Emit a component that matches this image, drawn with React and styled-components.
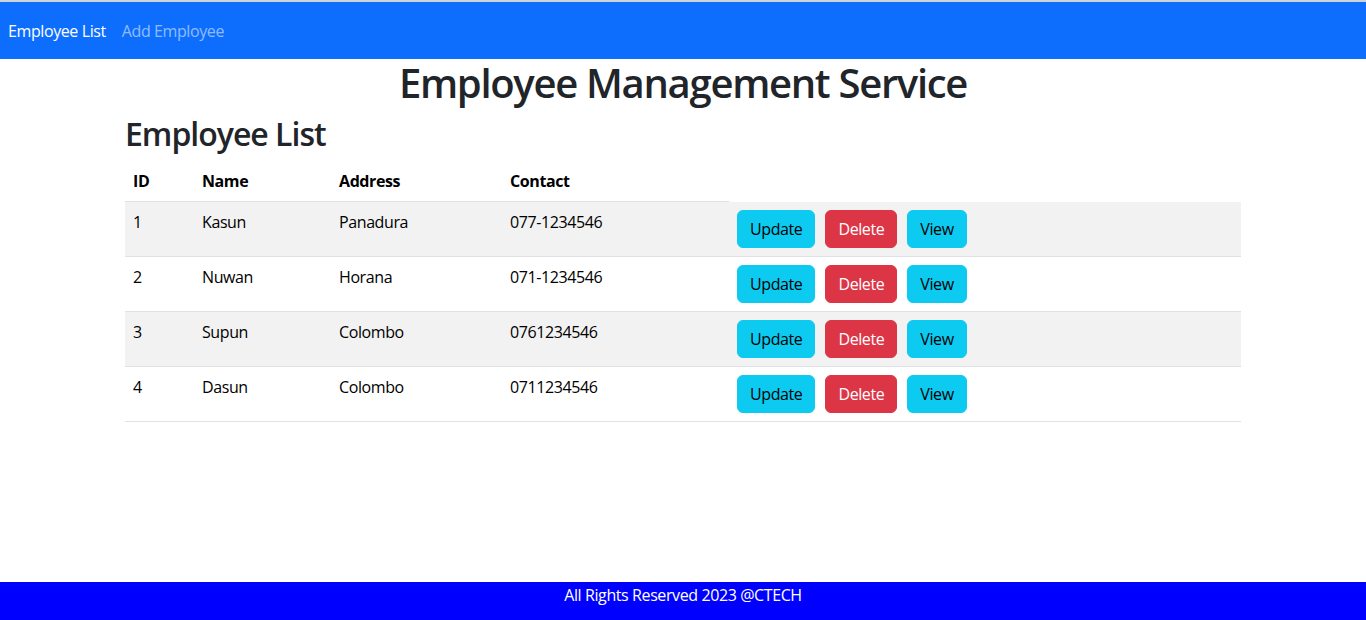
import React from 'react';
import styled, {createGlobalStyle} from 'styled-components';

const GlobalStyle = createGlobalStyle`
    html, body {
        margin: 0;
        padding: 0;
    }
    body {
        font-family: "Open Sans", "Noto Sans", sans-serif;
        font-size: 16px;
        line-height: 1.5;
        letter-spacing: -0.4px;
        color: #212529;
        background: #fff;
    }
    * {
        box-sizing: border-box;
    }
`

const Page = styled.div`
    display: flex;
    flex-direction: column;
    min-height: 100vh;
`

// 상단 네비게이션
const NavBar = styled.nav`
    display: flex;
    align-items: center;
    height: 59px;
    border-top: 2px solid #cfd2d6;
    background-color: #0d6efd;
    padding: 1px 0 0 8px;
`

const NavLink = styled.a`
    padding: 8px 16px 8px 0;
    color: ${props => props.active ? '#fff' : 'rgba(255, 255, 255, 0.55)'};
    text-decoration: none;
    font-size: 16px;
    cursor: pointer;
`

const Main = styled.main`
    flex: 1;
`

const Title = styled.h1`
    margin: 0 0 8px;
    text-align: center;
    font-size: 40px;
    font-weight: 600;
    letter-spacing: -1.3px;
    line-height: 1.2;
`

const Container = styled.div`
    width: 1140px;
    margin: 0 auto;
    padding: 0 12px;
`

const SubTitle = styled.h2`
    margin: 0 0 8px;
    font-size: 32px;
    font-weight: 600;
    letter-spacing: -1px;
    line-height: 1.2;
`

const Table = styled.table`
    width: 100%;
    border-collapse: collapse;
    color: #000;
`

const Th = styled.th`
    width: ${props => props.w}px;
    padding: 8px;
    text-align: left;
    font-weight: 700;
    border-bottom: 1px solid #dee2e6;
`

const Row = styled.tr`
    background-color: ${props => props.striped ? '#f2f2f2' : '#fff'};
`

const Td = styled.td`
    padding: 8px;
    vertical-align: top;
    border-bottom: 1px solid #dee2e6;
`

const ActionCell = styled(Td)`
    display: flex;
    gap: 10px;
`

const Btn = styled.button`
    font-family: inherit;
    font-size: 16px;
    line-height: 1.5;
    letter-spacing: -0.4px;
    padding: 6px 12px;
    border: 1px solid ${props => props.danger ? '#dc3545' : '#0dcaf0'};
    border-radius: 6px;
    background-color: ${props => props.danger ? '#dc3545' : '#0dcaf0'};
    color: ${props => props.danger ? '#fff' : '#000'};
    cursor: pointer;
`

const Footer = styled.footer`
    height: 38px;
    padding-top: 1px;
    background-color: #0000ff;
    color: #fff;
    text-align: center;
`

const employees = [
    {id: 1, name: 'Kasun', address: 'Panadura', contact: '077-1234546'},
    {id: 2, name: 'Nuwan', address: 'Horana', contact: '071-1234546'},
    {id: 3, name: 'Supun', address: 'Colombo', contact: '0761234546'},
    {id: 4, name: 'Dasun', address: 'Colombo', contact: '0711234546'},
]

const App = () => {
    return (
        <Page>
            <GlobalStyle/>
            <NavBar>
                <NavLink active>Employee List</NavLink>
                <NavLink>Add Employee</NavLink>
            </NavBar>
            <Main>
                <Title>Employee Management Service</Title>
                <Container>
                    <SubTitle>Employee List</SubTitle>
                    <Table>
                        <thead>
                            <tr>
                                <Th w={69}>ID</Th>
                                <Th w={137}>Name</Th>
                                <Th w={171}>Address</Th>
                                <Th w={227}>Contact</Th>
                            </tr>
                        </thead>
                        <tbody>
                            {
                                employees.map((e, i) => (
                                    <Row key={e.id} striped={i % 2 === 0}>
                                        <Td>{e.id}</Td>
                                        <Td>{e.name}</Td>
                                        <Td>{e.address}</Td>
                                        <Td>{e.contact}</Td>
                                        <ActionCell>
                                            <Btn>Update</Btn>
                                            <Btn danger>Delete</Btn>
                                            <Btn>View</Btn>
                                        </ActionCell>
                                    </Row>
                                ))
                            }
                        </tbody>
                    </Table>
                </Container>
            </Main>
            <Footer>All Rights Reserved 2023 @CTECH</Footer>
        </Page>
    )
}

export default App;
